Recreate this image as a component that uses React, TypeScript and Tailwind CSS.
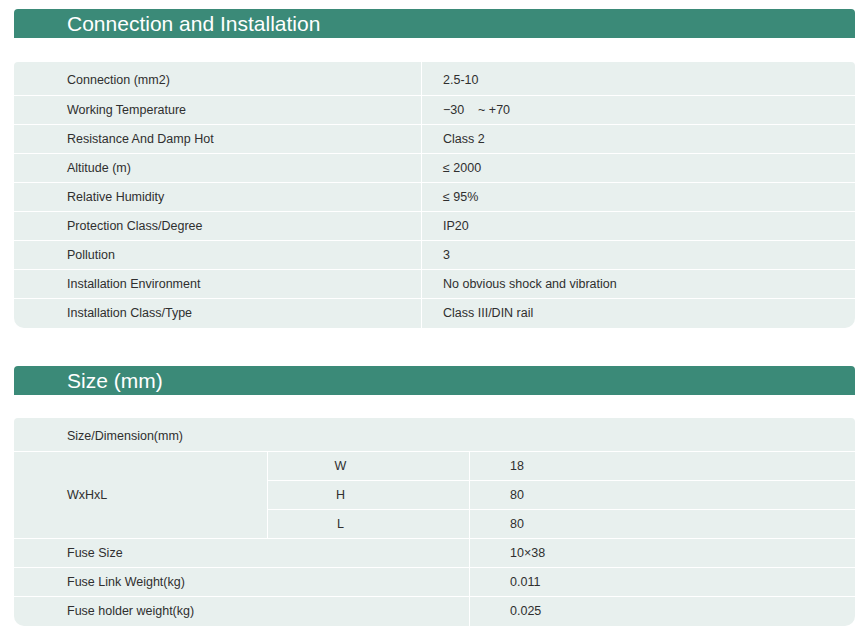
const installation = [
  { label: "Connection (mm2)", value: "2.5-10" },
  { label: "Working Temperature", value: "−30    ~ +70" },
  { label: "Resistance And Damp Hot", value: "Class 2" },
  { label: "Altitude (m)", value: "≤ 2000" },
  { label: "Relative Humidity", value: "≤ 95%" },
  { label: "Protection Class/Degree", value: "IP20" },
  { label: "Pollution", value: "3" },
  { label: "Installation Environment", value: "No obvious shock and vibration" },
  { label: "Installation Class/Type", value: "Class III/DIN rail" },
];

const dims = [
  { axis: "W", value: "18" },
  { axis: "H", value: "80" },
  { axis: "L", value: "80" },
];

const weights = [
  { label: "Fuse Size", value: "10×38" },
  { label: "Fuse Link Weight(kg)", value: "0.011" },
  { label: "Fuse holder weight(kg)", value: "0.025" },
];

function SectionHeader({ title }: { title: string }) {
  return (
    <div className="flex h-[29px] items-center rounded-t-[4px] bg-[#3b8a78] pl-[53px]">
      <h2 className="text-[21px] leading-none text-white">{title}</h2>
    </div>
  );
}

const cell = "flex items-center bg-[#e8f0ee]";

export default function App() {
  return (
    <div
      className="min-h-[637px] w-[867px] bg-white pl-[14px] pr-[12px] pt-[9px] text-[12.5px] text-[#2f2f2f]"
      style={{ fontFamily: '"Liberation Sans", Arial, sans-serif' }}
    >
      <SectionHeader title="Connection and Installation" />

      {/* Connection table */}
      <div className="mt-[24px] grid grid-cols-[407px_1fr] grid-rows-[33px_repeat(7,28px)_29px] gap-px overflow-hidden rounded-t-[4px] rounded-b-[10px] bg-white">
        {installation.map((row, i) => (
          <div key={row.label} className="contents">
            <div className={`${cell} pl-[53px] ${i === 0 ? "pt-[3px]" : ""}`}>{row.label}</div>
            <div className={`${cell} whitespace-pre pl-[21px] ${i === 0 ? "pt-[3px]" : ""}`}>
              {row.value}
            </div>
          </div>
        ))}
      </div>

      <div className="mt-[38px]">
        <SectionHeader title="Size (mm)" />
      </div>

      {/* Size table */}
      <div className="mt-[23px] grid grid-cols-[253px_201px_1fr] grid-rows-[33px_repeat(5,28px)_29px] gap-px overflow-hidden rounded-t-[4px] rounded-b-[10px] bg-white">
        <div className={`${cell} col-span-3 pl-[53px] pt-[3px]`}>Size/Dimension(mm)</div>
        <div className={`${cell} row-span-3 pl-[53px]`}>WxHxL</div>
        {dims.map((d) => (
          <div key={d.axis} className="contents">
            <div className={`${cell} justify-center pr-[56px]`}>{d.axis}</div>
            <div className={`${cell} pl-[40px]`}>{d.value}</div>
          </div>
        ))}
        {weights.map((w) => (
          <div key={w.label} className="contents">
            <div className={`${cell} col-span-2 pl-[53px]`}>{w.label}</div>
            <div className={`${cell} pl-[40px]`}>{w.value}</div>
          </div>
        ))}
      </div>
    </div>
  );
}
